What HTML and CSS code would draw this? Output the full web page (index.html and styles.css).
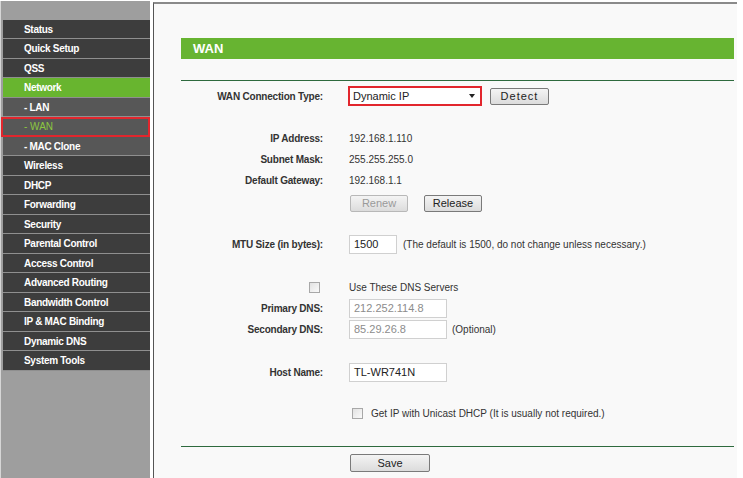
FILE: index.html
```html
<!DOCTYPE html>
<html>
<head>
<meta charset="utf-8">
<link rel="stylesheet" href="styles.css">
</head>
<body>
<div class="page">
  <nav class="sidebar">
    <div class="item">Status</div>
    <div class="item">Quick Setup</div>
    <div class="item">QSS</div>
    <div class="item active">Network</div>
    <div class="item sub">- LAN</div>
    <div class="item sub current">- WAN</div>
    <div class="item sub">- MAC Clone</div>
    <div class="item">Wireless</div>
    <div class="item">DHCP</div>
    <div class="item">Forwarding</div>
    <div class="item">Security</div>
    <div class="item">Parental Control</div>
    <div class="item">Access Control</div>
    <div class="item">Advanced Routing</div>
    <div class="item">Bandwidth Control</div>
    <div class="item">IP &amp; MAC Binding</div>
    <div class="item">Dynamic DNS</div>
    <div class="item">System Tools</div>
  </nav>
  <main class="content">
    <div class="inner">
      <div class="title-bar">WAN</div>
      <div class="rule"></div>

      <div class="row row-type">
        <div class="label">WAN Connection Type:</div>
        <div class="value">
          <div class="select-box"><span>Dynamic IP</span><span class="arrow"></span></div>
          <button class="btn btn-detect">Detect</button>
        </div>
      </div>

      <div class="group group-ip">
        <div class="row row-21">
          <div class="label">IP Address:</div>
          <div class="value">192.168.1.110</div>
        </div>
        <div class="row row-21">
          <div class="label">Subnet Mask:</div>
          <div class="value">255.255.255.0</div>
        </div>
        <div class="row row-21">
          <div class="label">Default Gateway:</div>
          <div class="value">192.168.1.1</div>
        </div>
      </div>

      <div class="row row-buttons">
        <div class="label"></div>
        <div class="value">
          <button class="btn btn-renew" disabled>Renew</button>
          <button class="btn btn-release">Release</button>
        </div>
      </div>

      <div class="row row-mtu">
        <div class="label">MTU Size (in bytes):</div>
        <div class="value">
          <div class="field field-mtu">1500</div>
          <span class="note">(The default is 1500, do not change unless necessary.)</span>
        </div>
      </div>

      <div class="group group-dns">
        <div class="row row-21">
          <div class="label"><span class="checkbox"></span></div>
          <div class="value">Use These DNS Servers</div>
        </div>
        <div class="row row-21">
          <div class="label">Primary DNS:</div>
          <div class="value"><div class="field field-dns muted">212.252.114.8</div></div>
        </div>
        <div class="row row-21">
          <div class="label">Secondary DNS:</div>
          <div class="value"><div class="field field-dns muted">85.29.26.8</div><span class="note note-opt">(Optional)</span></div>
        </div>
      </div>

      <div class="row row-host">
        <div class="label">Host Name:</div>
        <div class="value"><div class="field field-dns">TL-WR741N</div></div>
      </div>

      <div class="row row-unicast">
        <div class="label"></div>
        <div class="value"><span class="checkbox cb-unicast"></span>Get IP with Unicast DHCP (It is usually not required.)</div>
      </div>

      <div class="rule rule-bottom"></div>

      <div class="row row-save">
        <div class="label"></div>
        <div class="value"><button class="btn btn-save">Save</button></div>
      </div>
    </div>
  </main>
</div>
</body>
</html>
```

FILE: styles.css
```css
* { box-sizing: border-box; }
html, body {
  margin: 0;
  padding: 0;
  background: #ffffff;
  font-family: "Liberation Sans", Arial, sans-serif;
  font-size: 10px;
  color: #333333;
}
.page {
  display: flex;
  height: 478px;
  overflow: hidden;
}
.sidebar {
  width: 150px;
  flex: none;
  margin-top: 1px;
  padding-top: 18.5px;
  padding-left: 2px;
  background: #9e9e9e;
  border-left: 1px solid #d6d6d6;
}
.item {
  height: 19.5px;
  line-height: 19.5px;
  padding-left: 21px;
  background: #3d3d3d;
  border-bottom: 1.5px solid #8f8f8f;
  color: #ffffff;
  font-weight: bold;
  font-size: 10px;
  letter-spacing: -0.3px;
  white-space: nowrap;
}
.item.active {
  background: #68b52f;
}
.item.sub {
  background: #575757;
}
.item.current {
  color: #8cc63f;
  font-weight: normal;
  letter-spacing: 0;
  outline: 2px solid #e2262d;
  outline-offset: -2px;
  margin-left: -2px;
  padding-left: 23px;
  position: relative;
}
.content {
  flex: 1;
  margin-left: 3px;
  margin-top: 2px;
  margin-right: 6px;
  border-left: 1px solid #555555;
  border-top: 2px solid #8a8a8a;
  background: #f9f9f9;
}
.inner {
  padding-left: 27px;
  padding-right: 3px;
}
.title-bar {
  margin-top: 34px;
  height: 21px;
  line-height: 21px;
  background: #67b431;
  color: #ffffff;
  font-weight: bold;
  font-size: 13px;
  padding-left: 12px;
}
.rule {
  margin-top: 21px;
  height: 1px;
  background: #2e6a3e;
}
.rule-bottom {
  margin-top: 22px;
}
.row {
  display: flex;
  align-items: center;
}
.label {
  width: 142px;
  flex: none;
  text-align: right;
  font-weight: bold;
  letter-spacing: -0.2px;
  color: #333333;
  display: flex;
  justify-content: flex-end;
  align-items: center;
}
.value {
  margin-left: 26px;
  display: flex;
  align-items: center;
  white-space: nowrap;
}
.row-type {
  margin-top: 5px;
  height: 20px;
}
.row-type .value {
  margin-left: 25px;
}
.select-box {
  width: 134px;
  height: 20px;
  border: 2px solid #e2262d;
  background: #ffffff;
  display: flex;
  align-items: center;
  justify-content: space-between;
  padding-left: 3px;
  padding-right: 5px;
  color: #222222;
  font-size: 11px;
}
.arrow {
  width: 0;
  height: 0;
  border-left: 3px solid transparent;
  border-right: 3px solid transparent;
  border-top: 4px solid #222222;
}
.btn {
  font-family: "Liberation Sans", Arial, sans-serif;
  font-size: 11px;
  color: #222222;
  height: 17px;
  padding: 0;
  border: 1px solid #7a7a7a;
  border-radius: 2px;
  background: linear-gradient(#f4f4f4, #dcdcdc);
}
.btn-detect {
  margin-left: 8px;
  width: 59px;
  letter-spacing: 1px;
}
.group-ip {
  margin-top: 22px;
}
.row-21 {
  height: 21px;
}
.row-buttons {
  margin-top: 3px;
  height: 18px;
}
.row-buttons .value {
  margin-left: 27px;
}
.btn-renew {
  width: 58px;
  color: #9a9a9a;
  border-color: #b8b8b8;
}
.btn-release {
  width: 58px;
  margin-left: 16px;
}
.row-mtu {
  margin-top: 23px;
  height: 19px;
}
.field {
  height: 19px;
  line-height: 17px;
  border: 1px solid #d0d0d0;
  background: #ffffff;
  padding-left: 4px;
  color: #222222;
  font-size: 11px;
}
.field-mtu {
  width: 48px;
}
.field-dns {
  width: 98px;
}
.muted {
  color: #8c8c8c;
}
.note {
  margin-left: 6px;
}
.note-opt {
  margin-left: 5px;
}
.group-dns {
  margin-top: 23px;
}
.checkbox {
  display: inline-block;
  width: 11px;
  height: 11px;
  border: 1px solid #a8a8a8;
  background: linear-gradient(135deg, #e2e2e2, #fafafa);
}
.group-dns .label .checkbox {
  margin-right: 3px;
}
.row-host {
  margin-top: 22px;
  height: 21px;
}
.row-unicast {
  margin-top: 20px;
  height: 21px;
}
.cb-unicast {
  margin-left: 3px;
  margin-right: 8px;
}
.row-save {
  margin-top: 7px;
  height: 18px;
}
.row-save .value {
  margin-left: 27px;
}
.btn-save {
  width: 80px;
  height: 18px;
}
```
